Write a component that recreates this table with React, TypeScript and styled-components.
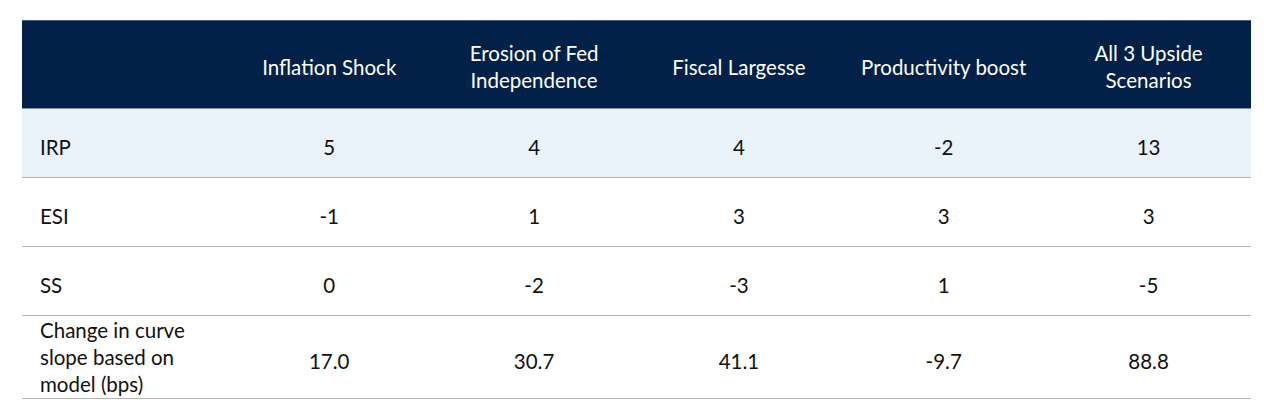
import React, { FC } from "react";
import styled, { createGlobalStyle } from "styled-components";

const GlobalStyle = createGlobalStyle`
    html, body {
        margin: 0;
        padding: 0;
        background: #fff;
    }
    body {
        font-family: Lato, "Open Sans", "Liberation Sans", sans-serif;
        color: #111;
    }
`;

const Page = styled.div`
    padding: 20px 0 0 22px;
`;

const Table = styled.table`
    width: 1229px;
    table-layout: fixed;
    border-collapse: collapse;
    font-size: 20.5px;
    line-height: 27px;
`;

const HeadRow = styled.tr`
    height: 88px;
    background-color: #012148;
    border-top: 1px solid #4a5d78;
    border-bottom: 1px solid #8293a8;
`;

const Th = styled.th`
    padding: 5px 4px 0;
    font-weight: normal;
    color: #fff;
    text-align: center;
    vertical-align: middle;
`;

interface RowProps {
    shaded?: boolean;
    tall?: boolean;
}

const Tr = styled.tr<RowProps>`
    height: ${props => props.tall ? '82px' : '69px'};
    background-color: ${props => props.shaded ? '#eaf2fa' : 'transparent'};
    border-bottom: 1px solid #b4b4b4;
`;

const Label = styled.td<RowProps>`
    padding: ${props => props.tall ? '1px' : '8px'} 4px 0 18px;
    text-align: left;
    vertical-align: middle;
`;

const Value = styled.td`
    padding: 8px 4px 0;
    text-align: center;
    vertical-align: middle;
`;

const headers: React.ReactNode[] = [
    "Inflation Shock",
    <>Erosion of Fed<br />Independence</>,
    "Fiscal Largesse",
    "Productivity boost",
    <>All 3 Upside<br />Scenarios</>,
];

interface Row {
    label: React.ReactNode;
    values: string[];
    shaded?: boolean;
    tall?: boolean;
}

const rows: Row[] = [
    { label: "IRP", values: ["5", "4", "4", "-2", "13"], shaded: true },
    { label: "ESI", values: ["-1", "1", "3", "3", "3"] },
    { label: "SS", values: ["0", "-2", "-3", "1", "-5"] },
    {
        label: <>Change in curve<br />slope based on<br />model (bps)</>,
        values: ["17.0", "30.7", "41.1", "-9.7", "88.8"],
        tall: true,
    },
];

const App: FC = () => {
    return <Page>
        <GlobalStyle />
        <Table>
            <thead>
                <HeadRow>
                    <Th />
                    {headers.map((h, i) => <Th key={i}>{h}</Th>)}
                </HeadRow>
            </thead>
            <tbody>
                {rows.map((row, i) => {
                    return <Tr key={i} shaded={row.shaded} tall={row.tall}>
                        <Label tall={row.tall}>{row.label}</Label>
                        {row.values.map((v, j) => <Value key={j}>{v}</Value>)}
                    </Tr>;
                })}
            </tbody>
        </Table>
    </Page>;
};

export default App;
